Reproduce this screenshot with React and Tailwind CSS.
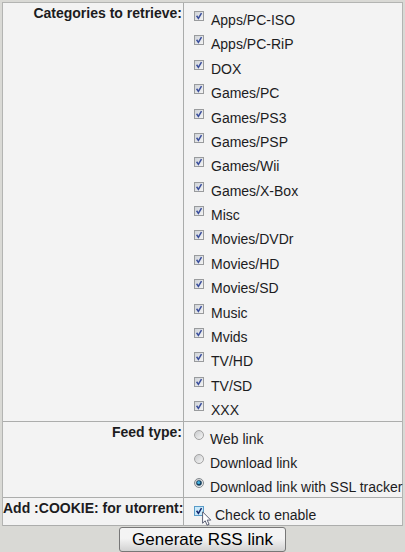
import React, { useState } from 'react';

const CATEGORIES = [
  'Apps/PC-ISO',
  'Apps/PC-RiP',
  'DOX',
  'Games/PC',
  'Games/PS3',
  'Games/PSP',
  'Games/Wii',
  'Games/X-Box',
  'Misc',
  'Movies/DVDr',
  'Movies/HD',
  'Movies/SD',
  'Music',
  'Mvids',
  'TV/HD',
  'TV/SD',
  'XXX',
];

const FEED_TYPES = [
  { value: 'web', label: 'Web link' },
  { value: 'download', label: 'Download link' },
  { value: 'ssl', label: 'Download link with SSL tracker' },
];

const Checkbox = ({ hot, ...props }) => (
  <span className="relative block size-[10px] shrink-0">
    <input
      type="checkbox"
      className={`peer block size-[10px] appearance-none border ${
        hot
          ? 'border-[#5a9cc8] bg-[#c9e9fa]'
          : 'border-[#999b9d] bg-linear-to-br from-[#cfd3d8] to-[#f4f4f4]'
      }`}
      {...props}
    />
    <svg
      viewBox="0 0 10 10"
      className="pointer-events-none absolute inset-0 hidden size-[10px] peer-checked:block"
      fill="none"
      stroke={hot ? '#14286e' : '#3b4f9c'}
      strokeWidth="1.5"
    >
      <path d="M2.6 4.8 4.4 7.4 7.5 2.2" />
    </svg>
  </span>
);

const Radio = (props) => (
  <span className="relative block size-[10px] shrink-0">
    <input
      type="radio"
      className="peer block size-[10px] appearance-none rounded-full border border-[#a2a2a2] bg-linear-to-br from-[#c8cacc] to-[#f6f6f6] checked:border-[#83898e]"
      {...props}
    />
    <svg
      viewBox="0 0 10 10"
      className="pointer-events-none absolute inset-0 hidden size-[10px] peer-checked:block"
    >
      <circle cx="5" cy="5" r="2.8" fill="#16405f" />
      <circle cx="4.7" cy="4.6" r="1.5" fill="#45b4e4" />
    </svg>
  </span>
);

const Pointer = () => (
  <svg
    viewBox="0 0 10 15"
    className="pointer-events-none absolute top-[13px] left-[8px] h-[15px] w-[10px]"
    fill="#fff"
    stroke="#4b4f66"
    strokeWidth="0.9"
    strokeLinejoin="round"
  >
    <path d="M.6.8v11.4l2.6-2.4 1.9 4.4 2-.9-1.9-4.2h3.6z" />
  </svg>
);

const Row = ({ title, children }) => (
  <div
    role="group"
    aria-label={title}
    className="grid grid-cols-[181px_1fr] border-b border-[#acadac] bg-[#f3f3f3]"
  >
    <div className="border-r border-[#aaacab] pr-px text-right font-bold leading-[20px] whitespace-nowrap">
      {title}
    </div>
    <div className="pl-[10px] leading-[18px] whitespace-nowrap">{children}</div>
  </div>
);

export default function App() {
  const [categories, setCategories] = useState(CATEGORIES);
  const [feedType, setFeedType] = useState('ssl');
  const [cookie, setCookie] = useState(true);

  const toggleCategory = (name) => {
    setCategories((prev) =>
      prev.includes(name) ? prev.filter((c) => c !== name) : [...prev, name]
    );
  };

  return (
    <form
      onSubmit={(e) => e.preventDefault()}
      className="min-h-screen bg-[#d9d9d5] px-[2px] pt-[2px] font-['Liberation_Sans',Arial,sans-serif] text-[14px] text-[#1c1c1e]"
    >
      <div className="border-x border-t border-[#b3b4b2]">
        <Row title="Categories to retrieve:">
          <div className="flex min-h-[418px] flex-col justify-between pt-[8px]">
            {CATEGORIES.map((name) => (
              <label key={name} className="flex h-[20px] gap-[7px]">
                <Checkbox
                  checked={categories.includes(name)}
                  onChange={() => toggleCategory(name)}
                />
                {name}
              </label>
            ))}
          </div>
        </Row>

        <Row title="Feed type:">
          <div className="flex flex-col gap-[5px] pt-[8px]">
            {FEED_TYPES.map((type) => (
              <label key={type.value} className="flex h-[19px] gap-[6px]">
                <Radio
                  name="feedType"
                  value={type.value}
                  checked={feedType === type.value}
                  onChange={() => setFeedType(type.value)}
                />
                {type.label}
              </label>
            ))}
          </div>
        </Row>

        <Row title="Add :COOKIE: for utorrent:">
          <label className="relative flex h-[27px] gap-[11px] pt-[8px]">
            <Checkbox hot checked={cookie} onChange={() => setCookie(!cookie)} />
            Check to enable
            <Pointer />
          </label>
        </Row>
      </div>

      <div className="flex justify-center pt-px">
        <button
          type="submit"
          className="h-[25px] rounded-[3px] border border-[#777] bg-linear-to-b from-[#f4f4f4] from-45% to-[#d2d2d2] px-[12px] text-[17px] leading-[22px] text-black"
        >
          Generate RSS link
        </button>
      </div>
    </form>
  );
}
